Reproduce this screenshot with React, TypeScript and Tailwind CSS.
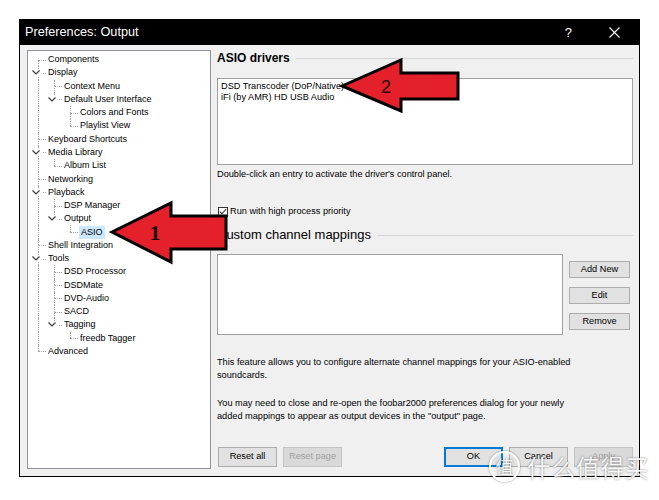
import React from "react";

type Node = { label: string; children?: Node[]; selected?: boolean };

type Row = {
  label: string;
  level: number;
  hasChildren: boolean;
  first: boolean;
  last: boolean;
  cont: boolean[];
  selected?: boolean;
};

const tree: Node[] = [
  { label: "Components" },
  {
    label: "Display",
    children: [
      { label: "Context Menu" },
      {
        label: "Default User Interface",
        children: [{ label: "Colors and Fonts" }, { label: "Playlist View" }],
      },
    ],
  },
  { label: "Keyboard Shortcuts" },
  { label: "Media Library", children: [{ label: "Album List" }] },
  { label: "Networking" },
  {
    label: "Playback",
    children: [
      { label: "DSP Manager" },
      { label: "Output", children: [{ label: "ASIO", selected: true }] },
    ],
  },
  { label: "Shell Integration" },
  {
    label: "Tools",
    children: [
      { label: "DSD Processor" },
      { label: "DSDMate" },
      { label: "DVD-Audio" },
      { label: "SACD" },
      { label: "Tagging", children: [{ label: "freedb Tagger" }] },
    ],
  },
  { label: "Advanced" },
];

function flatten(nodes: Node[], level: number, cont: boolean[]): Row[] {
  const rows: Row[] = [];
  nodes.forEach((n, i) => {
    const last = i === nodes.length - 1;
    rows.push({
      label: n.label,
      level,
      hasChildren: !!n.children,
      first: i === 0,
      last,
      cont,
      selected: n.selected,
    });
    if (n.children) rows.push(...flatten(n.children, level + 1, [...cont, !last]));
  });
  return rows;
}

const rows = flatten(tree, 0, []);

function TreeRow({ row }: { row: Row }) {
  return (
    <div className="flex h-[13.27px] items-center">
      {row.cont.map((c, i) => (
        <div key={i} className="relative h-full w-4 shrink-0">
          {c && <span className="absolute left-[8px] top-0 h-full border-l border-dotted border-[#a0a0a0]" />}
        </div>
      ))}
      <div className="relative h-full w-4 shrink-0">
        {!(row.level === 0 && row.first) && (
          <span className="absolute left-[8px] top-0 h-1/2 border-l border-dotted border-[#a0a0a0]" />
        )}
        {!row.last && (
          <span className="absolute left-[8px] top-1/2 h-1/2 border-l border-dotted border-[#a0a0a0]" />
        )}
        {row.hasChildren ? (
          <>
            <span className="absolute left-[1px] top-[3px] flex h-[7px] w-[9px] items-center justify-center bg-white">
              <svg width="8" height="5" viewBox="0 0 8 5">
                <path d="M0.5 0.5 L4 4 L7.5 0.5" fill="none" stroke="#3c3c3c" strokeWidth="1.2" />
              </svg>
            </span>
            <span className="absolute left-[13px] top-1/2 w-[3px] border-t border-dotted border-[#a0a0a0]" />
          </>
        ) : (
          <span className="absolute left-[8px] top-1/2 w-[8px] border-t border-dotted border-[#a0a0a0]" />
        )}
      </div>
      <span
        className={`ml-[1px] whitespace-nowrap leading-[13px] ${
          row.selected ? "bg-[#cce8ff] px-[2px]" : "px-[1px]"
        }`}
      >
        {row.label}
      </span>
    </div>
  );
}

function Btn({ label, kind }: { label: string; kind?: "default" | "disabled" }) {
  const cls =
    kind === "disabled"
      ? "bg-[#d9d9d9] border-[#c4c4c4] text-[#a0a0a0]"
      : kind === "default"
      ? "bg-[#e1e1e1] border-[#0078d7] shadow-[inset_0_0_0_1px_#0078d7] text-black"
      : "bg-[#e1e1e1] border-[#adadad] text-black";
  return (
    <div className={`flex h-[20px] w-[59px] items-center justify-center border text-[9.2px] ${cls}`}>
      {label}
    </div>
  );
}

function SideBtn({ label }: { label: string }) {
  return (
    <div className="flex h-[17px] w-[61px] items-center justify-center border border-[#adadad] bg-[#e1e1e1] text-[9.2px]">
      {label}
    </div>
  );
}

export default function App() {
  return (
    <div className="relative h-[500px] w-[659px] overflow-hidden bg-white font-['Liberation_Sans',Arial,sans-serif] text-black">
      <div className="ml-[19px] mt-[19px] w-[621px] border border-black bg-[#f0f0f0]">
        {/* Title bar */}
        <div className="flex h-[25px] items-center bg-black pl-[5px] text-white">
          <span className="text-[12.7px]">Preferences: Output</span>
          <span className="ml-auto text-[13px]">?</span>
          <svg className="ml-[37px] mr-[19px]" width="11" height="11" viewBox="0 0 11 11">
            <path d="M0.5 0.5 L10.5 10.5 M10.5 0.5 L0.5 10.5" stroke="white" strokeWidth="1.1" />
          </svg>
        </div>

        {/* Body */}
        <div className="flex h-[431px] gap-[6px] pl-[7px] pt-[5px]">
          {/* Tree */}
          <div className="h-[419px] w-[184px] shrink-0 border border-[#8f9399] bg-white pl-[2px] pt-[2px] text-[9px]">
            {rows.map((r, i) => (
              <TreeRow key={i} row={r} />
            ))}
          </div>

          {/* Page */}
          <div className="flex w-[416px] flex-col text-[9.2px]">
            <div className="flex h-[16px] items-center gap-[6px]">
              <span className="text-[12px] font-bold">ASIO drivers</span>
              <div className="h-px flex-1 bg-[#d5d5d5]" />
            </div>
            <div className="mt-[12px] h-[87px] border border-[#a0a0a0] bg-white px-[3px] pt-[2px] leading-[11px]">
              <div>DSD Transcoder (DoP/Native)</div>
              <div>iFi (by AMR) HD USB Audio</div>
            </div>
            <div className="mt-[3px] leading-[12px]">Double-click an entry to activate the driver's control panel.</div>

            <div className="mt-[25px] flex h-[13px] items-center gap-[2px] pl-[1px]">
              <div className="flex h-[10px] w-[10px] items-center justify-center border border-[#333] bg-white">
                <svg width="8" height="7" viewBox="0 0 8 7">
                  <path d="M0.8 3.6 L3 5.8 L7.2 1" fill="none" stroke="#222" strokeWidth="1.1" />
                </svg>
              </div>
              <span>Run with high process priority</span>
            </div>

            <div className="mt-[8px] flex h-[18px] items-center gap-[6px]">
              <span className="text-[13px]">Custom channel mappings</span>
              <div className="h-px flex-1 bg-[#d5d5d5]" />
            </div>

            <div className="mt-[10px] flex gap-[6px]">
              <div className="h-[81px] w-[346px] border border-[#a0a0a0] bg-white" />
              <div className="flex flex-col gap-[9px] pt-[7px]">
                <SideBtn label="Add New" />
                <SideBtn label="Edit" />
                <SideBtn label="Remove" />
              </div>
            </div>

            <p className="mt-[21px] leading-[13px]">
              This feature allows you to configure alternate channel mappings for your ASIO-enabled
              <br />
              soundcards.
            </p>
            <p className="mt-[15px] leading-[13px]">
              You may need to close and re-open the foobar2000 preferences dialog for your newly
              <br />
              added mappings to appear as output devices in the "output" page.
            </p>

            <div className="mt-[24px] flex gap-[6px] pl-[1px]">
              <Btn label="Reset all" />
              <Btn label="Reset page" kind="disabled" />
              <div className="flex-1" />
              <Btn label="OK" kind="default" />
              <Btn label="Cancel" />
              <Btn label="Apply" kind="disabled" />
            </div>
          </div>
        </div>
      </div>

      {/* Annotation arrows */}
      <svg className="pointer-events-none absolute left-0 top-0" width="659" height="500" viewBox="0 0 659 500">
        <polygon
          points="112,232 171,203 171,216 226,216 226,249 171,249 171,262"
          fill="#e4202a"
          stroke="#000"
          strokeWidth="3"
        />
        <text x="155" y="240" fontFamily="Liberation Serif, serif" fontWeight="bold" fontSize="21" fill="#1c0a0a" textAnchor="middle">
          1
        </text>
        <polygon
          points="342,86 401,60 401,73 458,73 458,99 401,99 401,111"
          fill="#e4202a"
          stroke="#000"
          strokeWidth="3"
        />
        <text x="386" y="93" fontFamily="Liberation Sans, sans-serif" fontSize="18" fill="#2a0505" textAnchor="middle">
          2
        </text>
      </svg>

      {/* Watermark */}
      <div className="pointer-events-none absolute left-[489px] top-[451px] flex items-center gap-[7px] font-['Noto_Sans_CJK_SC',sans-serif] text-white/95 [text-shadow:0_0_2px_rgba(0,0,0,0.55)]">
        <div className="flex h-[31px] w-[31px] items-center justify-center rounded-full border-2 border-white text-[18px] shadow-[0_0_2px_rgba(0,0,0,0.55)]">
          值
        </div>
        <span className="text-[23.5px] leading-[30px] tracking-[1px]">什么值得买</span>
      </div>
    </div>
  );
}
